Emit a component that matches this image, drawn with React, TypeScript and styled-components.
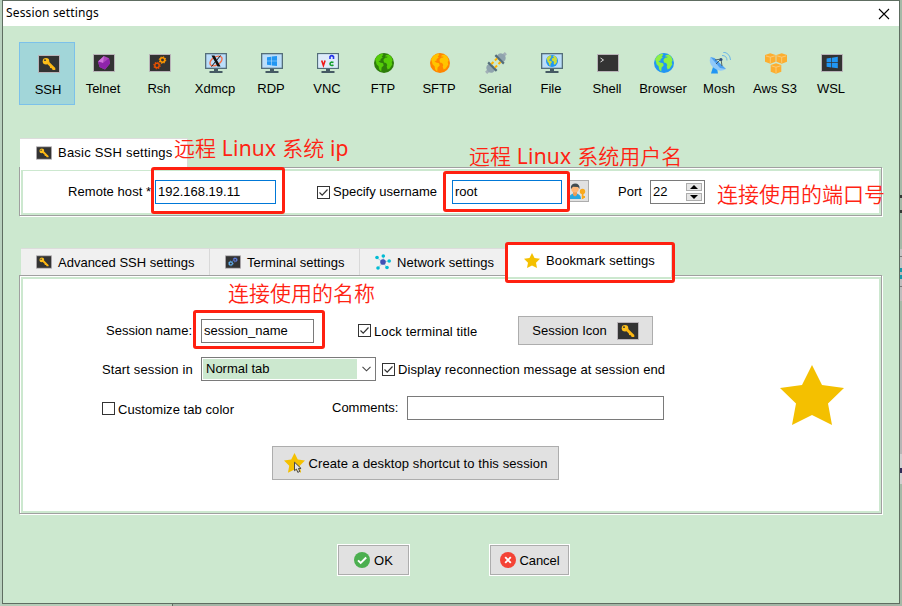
import React from "react";
import styled, { createGlobalStyle } from "styled-components";

const GREEN = "#cce8cf";

const GlobalStyle = createGlobalStyle`
  *, *::before, *::after { box-sizing: border-box; }
  html, body { margin: 0; width: 902px; height: 606px; overflow: hidden; background: #a6baa9; }
  body, input, button { font-family: "Liberation Sans", Arial, sans-serif; font-size: 13px; color: #000; }
  svg { display: block; flex: none; }
`;

const Desktop = styled.div`
  display: flex;
  width: 902px;
  height: 606px;
  background: linear-gradient(90deg, #b9d1bf 0 2px, transparent 2px),
    linear-gradient(90deg, #b5cdb8 0 172px, #606e62 172px 173px, #a3b6a6 173px);
`;

const Dialog = styled.main`
  position: relative;
  display: flex;
  flex-direction: column;
  width: 898px;
  height: 604px;
  margin-left: 2px;
  border: 1px solid #5e6d61;
  background: ${GREEN};
`;

const Backdrop = styled.div`
  width: 2px;
  height: 606px;
  background: linear-gradient(
    180deg,
    #a4b9a7 0 195px, #343a36 195px 198px, #a4b9a7 198px 210px, #343a36 210px 213px,
    #a4b9a7 213px 249px, #c4c4c4 249px 256px, #777 256px 257px, #c2c2c2 257px 268px,
    #1597a8 268px 272px, #b9b9b9 272px 275px, #1597a8 275px 279px, #bdbdbd 279px 286px,
    #777 286px 287px, #bdbdbd 287px 301px, #a4b9a7 301px 330px, #b5b5b5 330px 454px,
    #cfcfcf 454px 468px, #302c58 468px 473px, #cfcfcf 473px 484px, #a4b9a7 484px
  );
`;

const TitleBar = styled.header`
  display: flex;
  justify-content: space-between;
  align-items: center;
  height: 25px;
  padding: 0 9px 0 3px;
  background: #fff;
`;

const Title = styled.h1`
  margin: 0 0 2px;
  font: 400 12px/17px "Noto Sans", sans-serif;
  letter-spacing: 0.15px;
  white-space: nowrap;
`;

const Toolbar = styled.nav`
  display: flex;
  margin: 16px 0 0 16px;
`;

const Tool = styled.button<{ $active?: boolean }>`
  display: flex;
  flex-direction: column;
  align-items: center;
  width: 56px;
  height: 63px;
  padding: ${(p) => (p.$active ? "10px 0 0 4px" : "9px 0 0 2px")};
  border: 1px solid ${(p) => (p.$active ? "#7cc1ea" : "transparent")};
  background: ${(p) => (p.$active ? "#a2d6d9" : "transparent")};
  white-space: nowrap;
  line-height: 15px;
  gap: 7px;
`;

const Tabs = styled.div<{ $top: number; $left: number }>`
  position: relative;
  z-index: 1;
  display: flex;
  align-items: flex-end;
  margin: ${(p) => p.$top}px 0 0 ${(p) => p.$left}px;
`;

const Tab = styled.button<{ $w: number }>`
  display: flex;
  align-items: center;
  width: ${(p) => p.$w}px;
  height: 27px;
  padding: 0 0 0 15px;
  gap: 6px;
  border: 0;
  border-top: 1px solid #dcdcdc;
  border-right: 1px solid #d9d9d9;
  background: #f0f0f0;
  white-space: nowrap;
`;

const BasicTab = styled(Tab)`
  height: 32px;
  margin-bottom: -3px;
  padding: 0 0 4px 16px;
  background: #fff;
`;

const ActiveTab = styled(Tab)`
  height: 33px;
  margin-bottom: -2px;
  padding: 0 0 2px 18px;
  background: #fff;
`;

const Group = styled.section<{ $h: number }>`
  display: flex;
  width: 863px;
  height: ${(p) => p.$h}px;
  margin-left: 16px;
  padding: 3px 2px 2px 3px;
  border: 1px solid #a0a0a0;
  box-shadow: 1px 1px 0 #fff, inset 1px 1px 0 #fff;
`;

const Panel = styled.div`
  display: flex;
  flex: 1;
  background: #fff;
`;

const Form = styled.div`
  display: flex;
  flex-direction: column;
  width: 700px;
`;

const Row = styled.div<{ $top?: number; $h?: number }>`
  display: flex;
  align-items: center;
  height: ${(p) => p.$h ?? 24}px;
  margin-top: ${(p) => p.$top ?? 0}px;
`;

const Label = styled.span<{ $ml?: number; $w?: number; $ls?: number; $dy?: number }>`
  flex: none;
  width: ${(p) => (p.$w ? `${p.$w}px` : "auto")};
  margin-left: ${(p) => p.$ml ?? 0}px;
  margin-top: ${(p) => p.$dy ?? 0}px;
  letter-spacing: ${(p) => p.$ls ?? 0.06}px;
  line-height: 15px;
  white-space: nowrap;
`;

const ToolLabel = styled(Label)`
  margin-right: 2px;
`;

const Field = styled.input<{ $ml: number; $w: number; $focus?: boolean }>`
  flex: none;
  width: ${(p) => p.$w}px;
  height: 24px;
  margin: 0 0 0 ${(p) => p.$ml}px;
  padding: 0 2px 1px;
  border: 1px solid ${(p) => (p.$focus ? "#0078d7" : "#7a7a7a")};
  border-radius: 0;
  outline: 0;
  background: #fff;
`;

const Box = styled.span<{ $ml: number }>`
  display: flex;
  flex: none;
  width: 13px;
  height: 13px;
  margin-left: ${(p) => p.$ml}px;
  border: 1px solid #333;
  background: #fff;
`;

const Button = styled.button<{ $ml: number; $w: number; $h: number; $ring?: boolean }>`
  display: flex;
  flex: none;
  align-items: center;
  justify-content: center;
  width: ${(p) => p.$w}px;
  height: ${(p) => p.$h}px;
  margin: 0 0 0 ${(p) => p.$ml}px;
  padding: 0;
  gap: 4px;
  border: 1px solid #adadad;
  outline: ${(p) => (p.$ring ? "1px solid #fff" : "0")};
  background: #e1e1e1;
  white-space: nowrap;
`;

const UserButton = styled(Button)`
  align-self: flex-start;
  justify-content: flex-end;
  padding-right: 2px;
`;

const SessionIconButton = styled(Button)`
  gap: 10px;
`;

const Select = styled.div`
  display: flex;
  align-items: center;
  width: 175px;
  height: 24px;
  margin-left: 8px;
  padding: 1px;
  gap: 5px;
  border: 1px solid #7a7a7a;
  background: #fff;
`;

const SelectValue = styled.span`
  width: 154px;
  height: 20px;
  padding-left: 3px;
  background: ${GREEN};
  line-height: 19px;
`;

const Spinner = styled.div`
  display: flex;
  justify-content: space-between;
  width: 55px;
  height: 24px;
  margin-left: 8px;
  padding: 2px 2px 2px 2px;
  border: 1px solid #7a7a7a;
  line-height: 18px;
`;

const Arrows = styled.div`
  display: flex;
  flex-direction: column;
  gap: 2px;
`;

const Arrow = styled.span`
  display: flex;
  align-items: center;
  justify-content: center;
  width: 16px;
  height: 8px;
  border: 1px solid #adadad;
  background: #e6e6e6;
`;

const StarColumn = styled.div`
  padding: 86px 0 0 57px;
`;

const Actions = styled.footer`
  display: flex;
  gap: 81px;
  margin: 31px 0 0 335px;
`;

const Note = styled.span<{ $x: number; $y: number }>`
  position: absolute;
  z-index: 3;
  left: ${(p) => p.$x}px;
  top: ${(p) => p.$y}px;
  color: #ff2313;
  font: 350 21px/28px "Noto Sans CJK SC", sans-serif;
  white-space: pre;
`;

const Latin = styled.span`
  font-family: "Noto Sans", sans-serif;
  font-weight: 400;
  letter-spacing: 0.25px;
`;

const Highlight = styled.span<{ $x: number; $y: number; $w: number; $h: number }>`
  position: absolute;
  z-index: 2;
  left: ${(p) => p.$x}px;
  top: ${(p) => p.$y}px;
  width: ${(p) => p.$w}px;
  height: ${(p) => p.$h}px;
  border: 3px solid #ff2010;
  border-radius: 3px;
  pointer-events: none;
`;

const Screen = ({ w = 22, h = 18, children }: { w?: number; h?: number; children?: React.ReactNode }) => (
  <svg width={w} height={h} viewBox="0 0 22 18">
    <rect x=".5" y=".5" width="21" height="17" fill="#333" stroke="#b9b4b9" />
    {children}
  </svg>
);

const KeyIcon = ({ w, h }: { w?: number; h?: number }) => (
  <Screen w={w} h={h}>
    <circle cx="8" cy="6.2" r="3.3" fill="#fdc01b" />
    <circle cx="7" cy="5.2" r=".9" fill="#333" />
    <path d="M8.5 8.2 10.5 6.2 17.3 13v2h-2.6l-1-1.8-1.6-.2-.3-1.6z" fill="#fdb713" />
  </Screen>
);

const Gear = ({ x, y, r, color }: { x: number; y: number; r: number; color: string }) => (
  <g fill="none" stroke={color}>
    <circle cx={x} cy={y} r={r} strokeWidth="1.5" />
    <circle cx={x} cy={y} r={r + 1} strokeWidth="1.1" strokeDasharray={`${(r + 1) * 0.39} ${(r + 1) * 0.395}`} />
  </g>
);

const Monitor = ({ children }: { children?: React.ReactNode }) => (
  <svg width="22" height="20" viewBox="0 0 22 20">
    <path d="M0 0h22v16H0z" fill="#546e7a" />
    <path d="M1.3 1.3h19.4v13.4H1.3z" fill="#bbdefb" />
    <path d="M9 16h4v2h4.5v2h-13v-2H9z" fill="#455a64" />
    {children}
  </svg>
);

const WindowsMark = () => (
  <path d="M6 4.3 10.2 3.7v4H6zM10.8 3.6 16 2.9v4.8h-5.2zM6 8.3h4.2v4L6 11.7zM10.8 8.3H16v4.8l-5.2-.7z" fill="#2196f3" />
);

const Land = ({ color }: { color: string }) => (
  <path
    d="M1 6 4 2.2 8.2.6 9.4 2 7.7 3.2l1 1.3-2 1.6-.3 1.7-2 .2 1.7 1.4 3 .8.6 2.3-2.1 2-.4 4.3-2.1-2.5-.5-3.1-2.1-1.9-.4-2zM11.6 2.2l3-.8 2.7 2.3 1.4 3.6-1 1.6.6 2.6-2.6 4.1-2.1.8-.9-2.6.6-1.8-1.2-2-2.1-.4-.6-2.8 1.7-2 2.1-.3.2-1-2 .2z"
    fill={color}
  />
);

const Globe = ({ sea, land }: { sea: string; land: string }) => (
  <svg width="20" height="20" viewBox="0 0 20 20">
    <circle cx="10" cy="10" r="10" fill={sea} />
    <Land color={land} />
  </svg>
);

const Telnet = () => (
  <Screen>
    <path d="m11 2 5 2.3 1 5.2-5 6L6.500 13 5 7.500z" fill="#ab47bc" />
    <path d="m11 2-6 5.500 5 1.500z" fill="#ce70dc" />
    <path d="m10 9 2 6.500L6.500 13 5 7.500zM16 4.300 17 9.500 12 15.500 10 9z" fill="#8e24aa" />
  </Screen>
);

const Xdmcp = () => (
  <Monitor>
    <ellipse cx="11" cy="8" rx="6.700" ry="4" fill="none" stroke="#f4704a" strokeWidth="1.400" transform="rotate(-32 11 8)" />
    <path d="M6.500 2.500h3l6 11h-3z" fill="#111" />
    <path d="m15.500 2.500-9 11" stroke="#111" strokeWidth="1" />
  </Monitor>
);

const Vnc = () => (
  <Monitor>
    <path d="M1.300 1.300h19.400v13.400H1.300z" fill="#deebfa" />
    <g fill="none" strokeWidth="1.600">
      <path d="m4.700 7.500 1.700 5 1.700-5" stroke="#f01818" />
      <path d="M13 6V3.600q1.700-2 3.500 0V6" stroke="#2433e8" />
      <path d="M16.500 9.600q-3-1.300-3.500 1.200.5 2.500 3.500 1.200" stroke="#14a030" />
    </g>
  </Monitor>
);

const Serial = () => (
  <svg width="22" height="22" viewBox="0 0 22 22">
    <g transform="rotate(45 11 11)">
      <path d="M9.500-3h3v4h-3zM9.500 21h3v4h-3z" fill="#a3b0b7" />
      <path d="M6.500 5V2.500q1-3 4.500-3t4.500 3V5zM6.500 17v2.500q1 3 4.500 3t4.500-3V17z" fill="#90a4ae" />
      <path d="M5 4.800h12v2.200H5zM5 15h12v2.200H5z" fill="#546e7a" />
      <path d="M7.500 7h2v3h-2zM12.500 7h2v3h-2zM7.500 12h2v3h-2zM12.500 12h2v3h-2z" fill="#ffb300" />
    </g>
  </svg>
);

const FileMonitor = () => (
  <Monitor>
    <circle cx="11" cy="8" r="6" fill="#2196f3" />
    <g transform="translate(5 2) scale(.6)"><Land color="#cddc39" /></g>
  </Monitor>
);

const Dish = () => (
  <svg width="22" height="22" viewBox="0 0 22 22">
    <path d="m4 15-2 6.500h7l-1-5z" fill="#2196f3" />
    <path d="M1.500 5Q-1 11 5 16t12 1z" fill="#90caf9" />
    <path d="m1.500 5 4 1 11.500 11-6-1z" fill="#4b9ff0" />
    <path d="m7 12 5-5M6 8l6-1 1 7" fill="none" stroke="#37474f" strokeWidth=".8" />
    <circle cx="12" cy="7.500" r="1.500" fill="#2c4d7c" />
    <path d="M13 3.500q5 0 5 5M14 0q7 1 7.500 8" fill="none" stroke="#6bb5e8" />
  </svg>
);

const Cube = ({ x, y }: { x: number; y: number }) => (
  <g transform={`translate(${x} ${y})`}>
    <path d="M5.300 0 10.600 1.600v6.800L5.300 10.400 0 8.400V1.600z" fill="#fdae2f" />
    <path d="m.8 2.600 4.500 1.300 4.500-1.300M5.300 4v5.600" fill="none" stroke="#f9d795" strokeWidth=".7" />
  </g>
);

const Aws = () => (
  <svg width="22" height="21" viewBox="0 0 22 21">
    <Cube x={0} y={0.3} /><Cube x={11.400} y={0.3} /><Cube x={5.700} y={10.300} />
  </svg>
);

const Network = () => (
  <svg width="16" height="16" viewBox="0 0 16 16">
    <path d="M8 8 8.500 2M8 8 2 4M8 8l6-1M8 8l4 6M8 8l-5 6" stroke="#78cbdc" strokeWidth=".7" />
    <g fill="#00bcd4">
      <circle cx="8.300" cy="2" r="1.800" /><circle cx="2" cy="3.500" r="1.800" /><circle cx="14.200" cy="7" r="1.800" />
      <circle cx="12" cy="13.500" r="1.800" /><circle cx="3" cy="14" r="1.800" />
    </g>
    <circle cx="8" cy="8" r="2.800" fill="#3f51b5" />
  </svg>
);

const Star = ({ w, pointer }: { w: number; pointer?: boolean }) => (
  <svg width={w} height={(w * 60) / 64} viewBox="0 0 64 60">
    <path d="m32 0 10 20 22 3-16 15.500L52 60 32 50 12 60l4-21.500L0 23l22-3z" fill="#f4c000" />
    {pointer && <path d="M32 28v26l6-5 4 10 6-3-4-9h8z" fill="#e5e5e5" stroke="#444" strokeWidth="3" />}
  </svg>
);

const UserKey = () => (
  <svg width="17" height="17" viewBox="0 0 17 17">
    <path d="M0 16q0-5.500 6-5.500t6 5.500z" fill="#29a7e0" />
    <path d="M4 9h4v3l-2 1.500L4 12z" fill="#ef9b55" />
    <circle cx="6" cy="5.800" r="3.800" fill="#ffb777" />
    <path d="M2 6Q1 1 6 .5q5 0 4.500 5.500L9 4 4 3.800z" fill="#414c50" />
    <circle cx="13.500" cy="8.500" r="2.700" fill="#f9a91d" />
    <path d="M12.800 10h1.700v6h-1.700zM14 13h2v2h-2z" fill="#f9a91d" />
  </svg>
);

const CheckBox = ({ x, on }: { x: number; on?: boolean }) => (
  <Box $ml={x}>
    {on && <svg width="11" height="11" viewBox="0 0 11 11"><path d="m1.500 5.500 2.700 2.700 5.300-5.700" fill="none" stroke="#333" strokeWidth="1.200" /></svg>}
  </Box>
);

const Badge = ({ ok }: { ok?: boolean }) => (
  <svg width="16" height="16" viewBox="0 0 16 16">
    <circle cx="8" cy="8" r="8" fill={ok ? "#4caf50" : "#f44336"} />
    <path d={ok ? "m4 8.300 2.700 2.700 5.500-5.500" : "m5.200 5.200 5.600 5.600m0-5.600-5.600 5.600"} fill="none" stroke="#fff" strokeWidth="1.900" />
  </svg>
);

const tools: { name: string; icon: React.ReactNode }[] = [
  { name: "SSH", icon: <KeyIcon /> },
  { name: "Telnet", icon: <Telnet /> },
  { name: "Rsh", icon: <Screen><Gear x={8} y={11.500} r={2.200} color="#e65100" /><Gear x={13.500} y={6} r={2.200} color="#ff9800" /></Screen> },
  { name: "Xdmcp", icon: <Xdmcp /> },
  { name: "RDP", icon: <Monitor><WindowsMark /></Monitor> },
  { name: "VNC", icon: <Vnc /> },
  { name: "FTP", icon: <Globe sea="#2e7d0a" land="#55cc08" /> },
  { name: "SFTP", icon: <Globe sea="#ff8500" land="#ffc400" /> },
  { name: "Serial", icon: <Serial /> },
  { name: "File", icon: <FileMonitor /> },
  { name: "Shell", icon: <Screen><path d="m3.500 4 3 2-3 2" fill="none" stroke="#ddd" /></Screen> },
  { name: "Browser", icon: <Globe sea="#2196f3" land="#8df044" /> },
  { name: "Mosh", icon: <Dish /> },
  { name: "Aws S3", icon: <Aws /> },
  { name: "WSL", icon: <Screen><g transform="translate(-1.100 -.4) scale(1.120)"><WindowsMark /></g></Screen> },
];

const IconSlot = styled.span`
  display: flex;
  align-items: center;
  justify-content: center;
  width: 22px;
  height: 22px;
`;

export default function App() {
  return (
    <Desktop>
      <GlobalStyle />
      <Dialog>
        <TitleBar>
          <Title>Session settings</Title>
          <svg width="12" height="12" viewBox="0 0 12 12"><path d="m1 1 10 10M11 1 1 11" stroke="#000" strokeWidth="1.100" /></svg>
        </TitleBar>

        <Toolbar>
          {tools.map((t, i) => (
            <Tool key={t.name} $active={i === 0}>
              <IconSlot>{t.icon}</IconSlot>
              <ToolLabel $ls={0}>{t.name}</ToolLabel>
            </Tool>
          ))}
        </Toolbar>

        <Tabs $top={33} $left={17}>
          <BasicTab $w={168}><KeyIcon w={16} h={14} /><Label $ls={0.22}>Basic SSH settings</Label></BasicTab>
        </Tabs>
        <Group $h={49}>
          <Panel>
            <Row $top={9}>
              <Label $ml={45} $w={87} $dy={-2}>Remote host *</Label>
              <Field $ml={0} $w={121} $focus defaultValue="192.168.19.11" />
              <CheckBox x={41} on />
              <Label $ml={3} $w={119} $dy={-2} $ls={0}>Specify username</Label>
              <Field $ml={0} $w={110} $focus defaultValue="root" />
              <UserButton $ml={6} $w={21} $h={22}><UserKey /></UserButton>
              <Label $ml={29} $w={24} $dy={-2} $ls={0}>Port</Label>
              <Spinner>
                22
                <Arrows>
                  <Arrow><svg width="8" height="4" viewBox="0 0 8 4"><path d="m0 4 4-4 4 4z" /></svg></Arrow>
                  <Arrow><svg width="8" height="4" viewBox="0 0 8 4"><path d="m0 0 4 4 4-4z" /></svg></Arrow>
                </Arrows>
              </Spinner>
            </Row>
          </Panel>
        </Group>

        <Tabs $top={28} $left={18}>
          <Tab $w={189}><KeyIcon w={16} h={14} /><Label $ls={0}>Advanced SSH settings</Label></Tab>
          <Tab $w={150}>
            <Screen w={16} h={14}><Gear x={8} y={11} r={2.200} color="#64b5f6" /><Gear x={14} y={6} r={2} color="#5c7bd9" /></Screen>
            <Label $ls={0}>Terminal settings</Label>
          </Tab>
          <Tab $w={146}><Network /><Label>Network settings</Label></Tab>
          <ActiveTab $w={166}><Star w={16} /><Label $ls={0.12}>Bookmark settings</Label></ActiveTab>
        </Tabs>
        <Group $h={239}>
          <Panel>
            <Form>
              <Row $top={37} $h={29}>
                <Label $ml={83} $w={95} $ls={0}>Session name:</Label>
                <Field $ml={0} $w={113} defaultValue="session_name" />
                <CheckBox x={44} on />
                <Label $ml={3} $w={144} $dy={1} $ls={0.12}>Lock terminal title</Label>
                <SessionIconButton $ml={0} $w={135} $h={29}><Label $ls={0}>Session Icon</Label><KeyIcon /></SessionIconButton>
              </Row>
              <Row $top={12}>
                <Label $ml={79} $w={91} $ls={0.12}>Start session in</Label>
                <Select>
                  <SelectValue>Normal tab</SelectValue>
                  <svg width="9" height="6" viewBox="0 0 9 6"><path d="m.5 .8 4 4 4-4" fill="none" stroke="#444" strokeWidth="1.100" /></svg>
                </Select>
                <CheckBox x={6} on />
                <Label $ml={3} $dy={1}>Display reconnection message at session end</Label>
              </Row>
              <Row $top={15}>
                <CheckBox x={79} />
                <Label $ml={3} $w={214} $dy={2}>Customize tab color</Label>
                <Label $w={75} $dy={-2} $ls={0}>Comments:</Label>
                <Field $ml={0} $w={257} aria-label="Comments" />
              </Row>
              <Row $top={26} $h={34}>
                <Button $ml={249} $w={287} $h={34}><Star w={21} pointer /><Label $ls={0.1}>Create a desktop shortcut to this session</Label></Button>
              </Row>
            </Form>
            <StarColumn><Star w={64} /></StarColumn>
          </Panel>
        </Group>

        <Actions>
          <Button $ml={0} $w={71} $h={30} $ring><Badge ok /><Label>OK</Label></Button>
          <Button $ml={0} $w={79} $h={30} $ring><Badge /><Label $ls={-0.1}>Cancel</Label></Button>
        </Actions>

        <Highlight $x={148} $y={166} $w={134} $h={47} />
        <Highlight $x={440} $y={170} $w={127} $h={41} />
        <Highlight $x={502} $y={241} $w={170} $h={41} />
        <Highlight $x={190} $y={309} $w={132} $h={39} />
        <Note $x={171} $y={132}>远程<Latin> Linux </Latin>系统<Latin> ip</Latin></Note>
        <Note $x={466} $y={140}>远程<Latin> Linux </Latin>系统用户名</Note>
        <Note $x={714} $y={178}>连接使用的端口号</Note>
        <Note $x={225} $y={277}>连接使用的名称</Note>
      </Dialog>
      <Backdrop />
    </Desktop>
  );
}
